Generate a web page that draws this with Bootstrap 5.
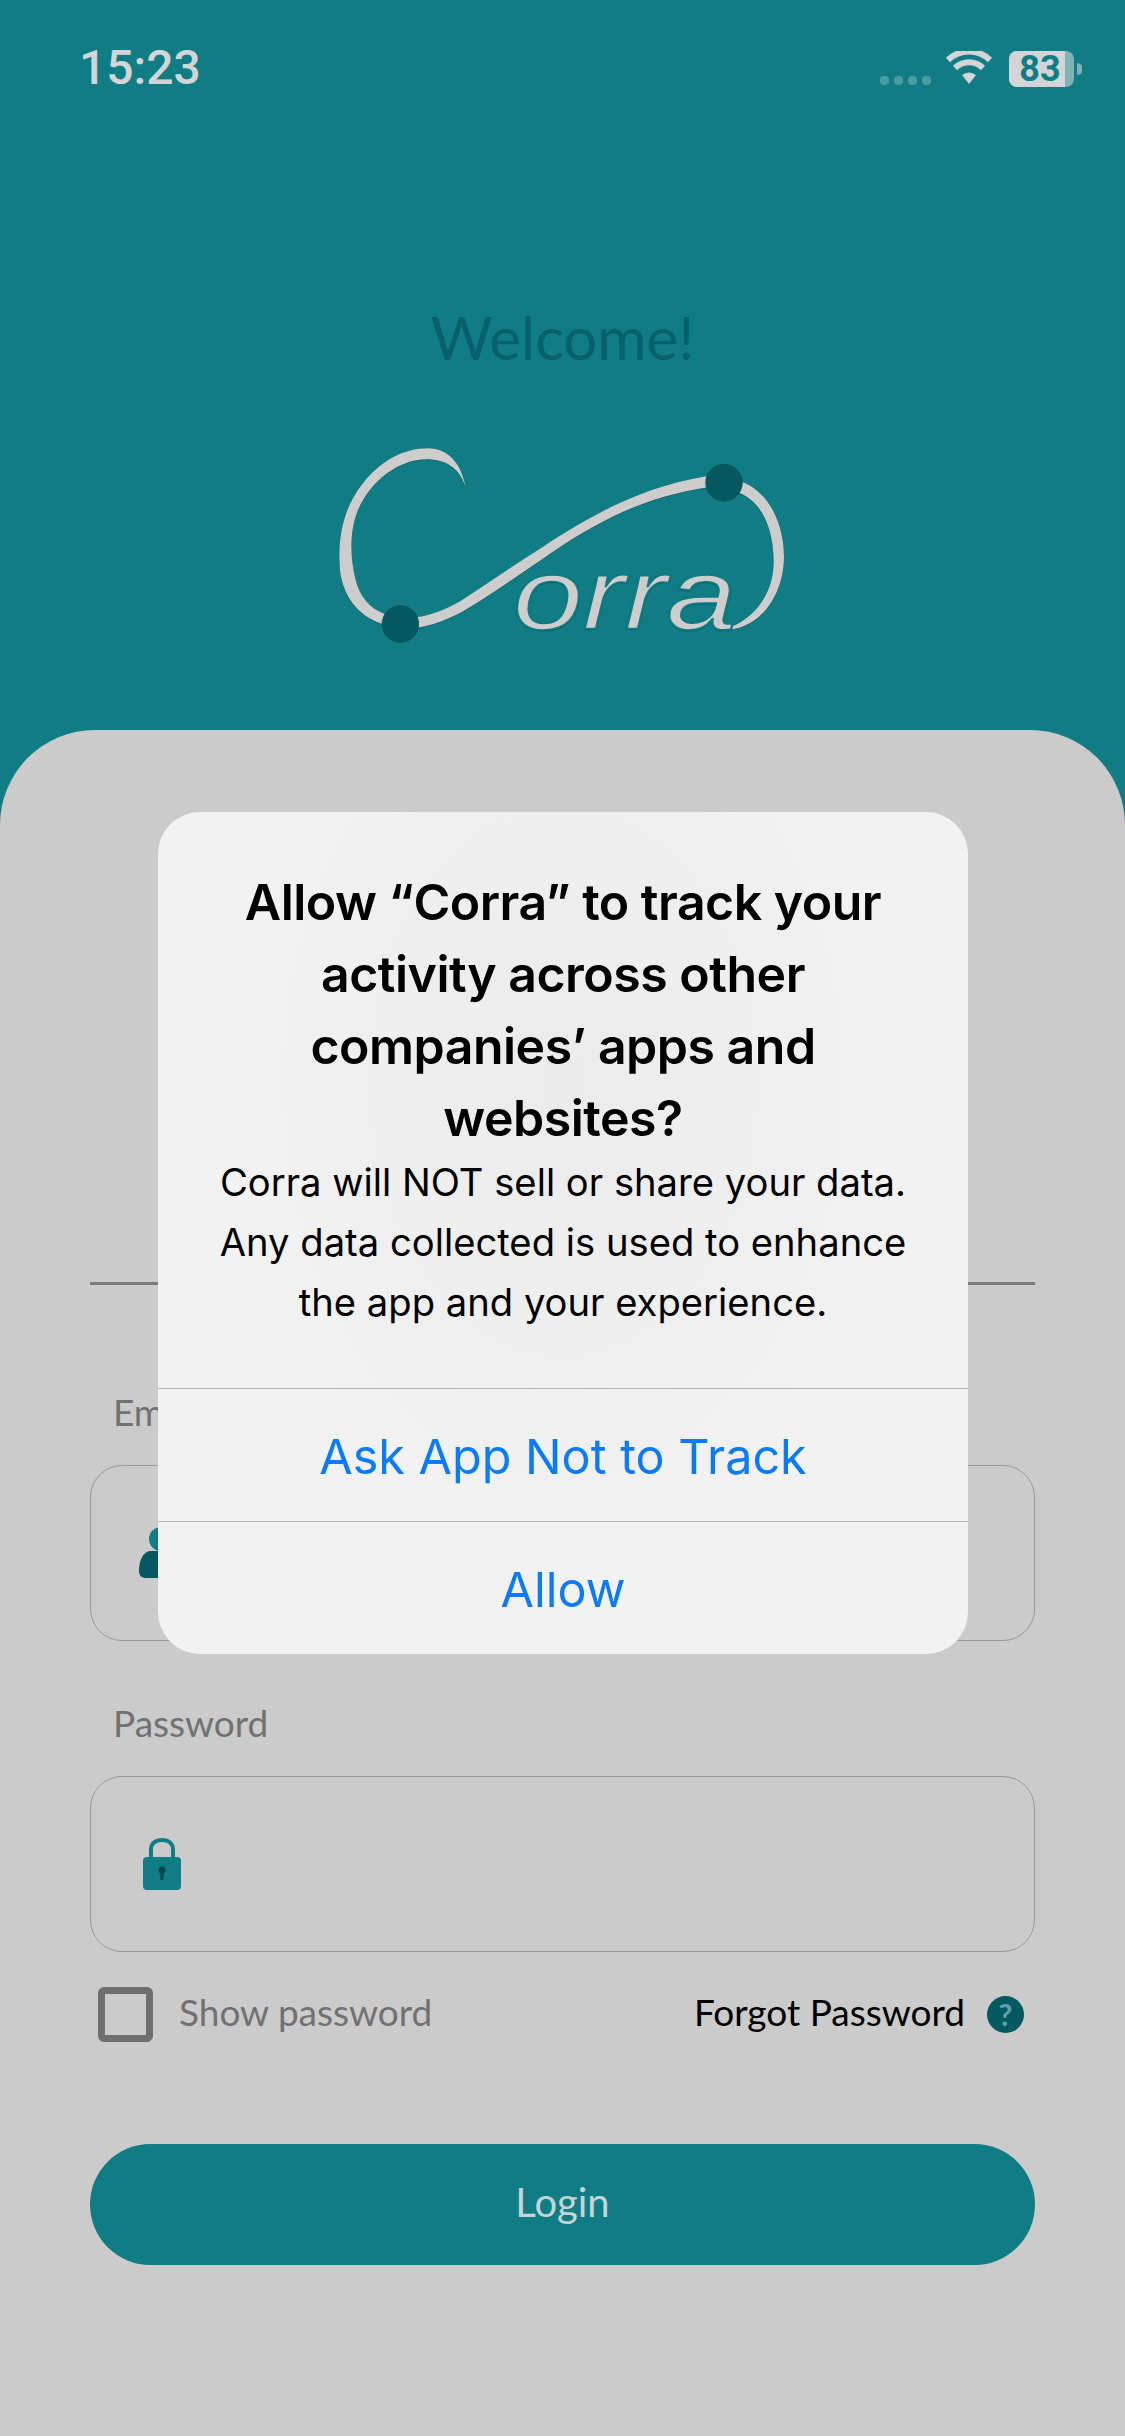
<!DOCTYPE html>
<html lang="en">
<head>
  <meta charset="UTF-8" />
  <meta name="viewport" content="width=device-width, initial-scale=1.0"/>
  <title>Corra Login</title>
  <link href="https://cdn.jsdelivr.net/npm/bootstrap@5.3.0/dist/css/bootstrap.min.css" rel="stylesheet"/>
  <style>
    body { background: #107d85; font-family: "Lato", "Noto Sans", sans-serif; }
    .app-screen { width: 1125px; height: 2436px; overflow: hidden; background: #107d85; }

    /* status bar */
    .status-row { height: 130px; padding: 51px 43px 0 79px; }
    .clock { font: 500 48px/34px "Roboto", sans-serif; color: #d2d4d5; }
    .signal-dots { gap: 5px; margin-right: 14px; margin-top: 25px; }
    .signal-dots i { width: 9px; height: 9px; border-radius: 4px; background: #4a9ca2; }
    .battery { width: 73px; height: 36px; }
    .battery-num { position: absolute; left: 0; top: 0; width: 62px; text-align: center; font: 700 36px/36px "Roboto", sans-serif; color: #107d85; }

    /* header */
    .welcome { margin: 172px 0 68px; font-size: 60px; line-height: 70px; font-weight: 400; color: #07606b; }
    .logo-svg { display: block; width: 460px; height: 210px; margin: 0 auto 80px; }
    .logo-line { fill: #cdcdcd; filter: drop-shadow(0 1px 1px #0a4a50); }
    .logo-word { font: italic 400 300px "Liberation Sans", sans-serif; fill: #cdcdcd; stroke: #107d85; stroke-width: 5px; filter: drop-shadow(0 1px 1px #0a4a50); }
    .logo-dot { fill: #03595f; stroke: #044a50; stroke-width: 2; }

    /* login sheet */
    .login-sheet { background: #cbcbcb; border-radius: 95px 95px 0 0; padding: 552px 90px 0; height: 1706px; }
    .sheet-rule { height: 3px; background: #7a7a7a; margin-bottom: 102px; }
    .field-label { display: block; margin: 0 0 28px 23px; font-size: 37px; line-height: 50px; height: 50px; color: #717171; }
    .field-box { height: 176px; border: 1px solid #9a9a9a; border-radius: 32px; padding-left: 48px; margin-bottom: 57px; }
    .field-box.last-field { margin-bottom: 35px; }
    .field-box .form-control { font-size: 36px; box-shadow: none; }
    .option-row { height: 54px; margin-bottom: 103px; padding-left: 8px; }
    .option-row .form-check-input { width: 55px; height: 55px; margin: 0 26px 0 0; border: 7px solid #6f6f6f; border-radius: 6px; background-color: transparent; box-shadow: none; }
    .option-row label { font-size: 37px; color: #717171; padding-bottom: 5px; }
    .forgot-link { font-size: 37px; color: #000; text-decoration: none; padding-bottom: 5px; }
    .help-dot { width: 37px; height: 37px; margin: 0 11px 0 22px; border-radius: 50%; background: #03595f; color: #5f9fa5; font: 700 30px/37px "Lato", sans-serif; text-align: center; }
    .login-btn { height: 121px; padding-bottom: 11px; font-size: 40px; background: #107d85; color: #c4d4d5; border: 0; }

    /* tracking alert */
    .track-alert { position: absolute; left: 158px; top: 812px; width: 810px; height: 842px; border: 0; border-radius: 42px; overflow: hidden; background: radial-gradient(ellipse at 50% 32%, #ebebeb 0%, #f2f2f2 60%); font-family: "Inter", "Roboto", sans-serif; color: #000; }
    .track-alert .card-body { padding: 54px 55px 0; height: 576px; flex: none; }
    .track-title { font-size: 50px; line-height: 72px; font-weight: 600; margin: 0; letter-spacing: -.5px; }
    .track-text { font-size: 38.2px; line-height: 60px; margin: -2px 0 0; }
    .track-alert .list-group-item { height: 133px; padding: 0; background: transparent; border: 0; border-top: 1px solid #b4b4b6; border-radius: 0; color: #0a7aff; font-size: 48.5px; line-height: 135px; text-align: center; }
  </style>
</head>
<body class="m-0">
  <div class="app-screen position-relative">
    <div class="status-row d-flex justify-content-between align-items-start">
      <span class="clock">15:23</span>
      <div class="d-flex align-items-start">
        <div class="signal-dots d-flex"><i></i><i></i><i></i><i></i></div>
        <svg width="48" height="34" viewBox="0 0 48 34" class="me-3">
          <path d="M24 33 L17 24 A11 11 0 0 1 31 24 Z" fill="#d2d4d5"/>
          <path d="M10 17 A20 20 0 0 1 38 17" fill="none" stroke="#d2d4d5" stroke-width="6"/>
          <path d="M3 9 A30 30 0 0 1 45 9" fill="none" stroke="#d2d4d5" stroke-width="6"/>
        </svg>
        <div class="battery position-relative">
          <svg width="73" height="36" viewBox="0 0 73 36" class="d-block">
            <rect width="65" height="36" rx="8" fill="#7fb3b7"/>
            <path d="M8 0 H56 V36 H8 A8 8 0 0 1 0 28 V8 A8 8 0 0 1 8 0 Z" fill="#d2d4d5"/>
            <path d="M68 12 A6 6 0 0 1 68 24 Z" fill="#7fb3b7"/>
          </svg>
          <span class="battery-num">83</span>
        </div>
      </div>
    </div>

    <h1 class="welcome text-center">Welcome!</h1>

    <svg class="logo-svg" viewBox="100 480 1380 630">
      <path class="logo-line" d="M498 622 C480 565 440 538 380 538 C300 538 215 600 175 690 C150 750 150 830 168 900 C180 950 210 985 255 1002 L255 1034 C185 1015 135 960 122 880 C112 790 125 690 190 610 C240 545 310 505 385 505 C445 505 485 550 498 622 Z"/>
      <path class="logo-line" d="M350 1012 C400 1005 450 985 500 952 C570 905 650 850 730 800 C860 715 1020 620 1225 588 L1225 622 C1040 650 900 720 760 815 C680 870 600 925 530 970 C470 1008 420 1032 350 1044 Z"/>
      <path class="logo-line" d="M1322 604 C1400 630 1452 720 1453 830 C1453 930 1395 1040 1285 1050 L1262 1050 C1340 1035 1424 960 1422 840 C1420 740 1385 665 1318 638 Z"/>
      <text class="logo-word" x="640" y="1046" textLength="670" lengthAdjust="spacingAndGlyphs">orra</text>
      <circle class="logo-dot" cx="302" cy="1032" r="55"/>
      <circle class="logo-dot" cx="1273" cy="608" r="55"/>
    </svg>

    <div class="login-sheet">
      <div class="sheet-rule"></div>
      <form>
        <label class="field-label" for="emailInput">Email</label>
        <div class="field-box d-flex align-items-center">
          <svg width="44" height="52" viewBox="0 0 44 52" class="flex-shrink-0">
            <circle cx="22" cy="12" r="12" fill="#107d85"/>
            <path d="M12 24 H32 C39 24 44 32 44 44 C44 49 41 51 37 51 H7 C3 51 0 49 0 44 C0 32 5 24 12 24 Z" fill="#03595f"/>
          </svg>
          <input id="emailInput" type="email" class="form-control border-0 bg-transparent" />
        </div>

        <label class="field-label" for="passwordInput">Password</label>
        <div class="field-box last-field d-flex align-items-center">
          <svg width="38" height="52" viewBox="0 0 38 52" class="flex-shrink-0 ms-1">
            <path d="M8 20 V12 C8 5 13 2 19 2 C25 2 30 5 30 12 V20" fill="none" stroke="#107d85" stroke-width="4"/>
            <rect y="19" width="38" height="33" rx="4" fill="#107d85"/>
            <circle cx="19" cy="32" r="3.5" fill="#03454a"/>
            <rect x="17.5" y="32" width="3" height="10" fill="#03454a"/>
          </svg>
          <input id="passwordInput" type="password" class="form-control border-0 bg-transparent" />
        </div>

        <div class="option-row d-flex align-items-center justify-content-between">
          <div class="d-flex align-items-center">
            <input id="showPassword" type="checkbox" class="form-check-input" />
            <label for="showPassword">Show password</label>
          </div>
          <div class="d-flex align-items-center">
            <a href="#" class="forgot-link">Forgot Password</a>
            <span class="help-dot">?</span>
          </div>
        </div>

        <button type="button" class="login-btn btn rounded-pill w-100">Login</button>
      </form>
    </div>

    <div class="track-alert card text-center">
      <div class="card-body">
        <h2 class="track-title">Allow “Corra” to track your activity across other companies’ apps and websites?</h2>
        <p class="track-text">Corra will NOT sell or share your data. Any data collected is used to enhance the app and your experience.</p>
      </div>
      <div class="list-group list-group-flush">
        <a href="#" class="list-group-item">Ask App Not to Track</a>
        <a href="#" class="list-group-item">Allow</a>
      </div>
    </div>
  </div>

  <script src="https://cdn.jsdelivr.net/npm/bootstrap@5.3.0/dist/js/bootstrap.bundle.min.js"></script>
</body>
</html>
